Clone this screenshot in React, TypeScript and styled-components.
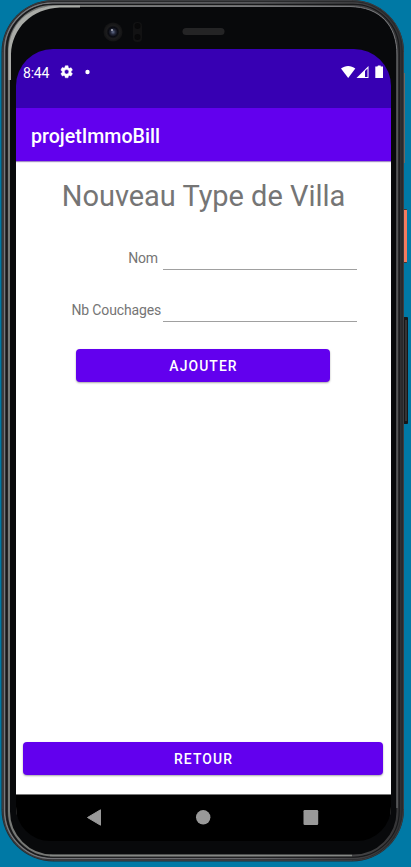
import React from "react";
import styled, { createGlobalStyle } from "styled-components";

const Global = createGlobalStyle`
  * { box-sizing: border-box; }
  body { margin: 0; background: #0079a5; font-family: Roboto, sans-serif; overflow: hidden; }
`;

const Stage = styled.div`
  position: relative;
  width: 411px;
  height: 867px;
  overflow: hidden;
  background: #0079a5;
  padding: 49px 20px 26px 16px;
`;

const Frame = styled.svg`
  position: absolute;
  left: 0;
  top: 0;
`;

const Screen = styled.main`
  position: relative;
  width: 375px;
  height: 792px;
  display: flex;
  flex-direction: column;
  overflow: hidden;
  border-radius: 37px 37px 34px 34px;
`;

const StatusBar = styled.header`
  height: 59px;
  flex: none;
  display: flex;
  align-items: flex-start;
  padding: 15px 7px 0 7px;
  background: #3700b3;
  color: #fff;
`;

const Clock = styled.span`
  width: 37px;
  font-size: 14px;
  line-height: 18px;
  letter-spacing: -0.2px;
`;

const StatusIcons = styled.svg<{ $end?: boolean }>`
  display: block;
  margin-left: ${(p) => (p.$end ? "auto" : "0")};
`;

const AppBar = styled.div`
  position: relative;
  height: 53px;
  flex: none;
  display: flex;
  align-items: center;
  padding: 3px 15px 0;
  background: #6200ee;
  color: #fff;
  font-size: 19.6px;
  font-weight: 500;
  box-shadow: 0 1px 1px rgba(70, 30, 140, 0.5);
`;

const Content = styled.section`
  flex: 1;
  display: flex;
  flex-direction: column;
  background: #fff;
  color: #757575;
`;

const Title = styled.h1`
  margin: 15px 0 0;
  text-align: center;
  font-size: 29px;
  line-height: 40px;
  font-weight: 400;
  letter-spacing: -0.03px;
  white-space: nowrap;
`;

const Form = styled.form`
  display: grid;
  grid-template-columns: 145px 194px;
  column-gap: 2px;
  grid-auto-rows: 52px;
  margin-top: 13px;
`;

const Label = styled.label<{ $inset: number }>`
  text-align: right;
  padding: 19px ${(p) => p.$inset}px 0 0;
  font-size: 14px;
  line-height: 20px;
  letter-spacing: -0.15px;
  white-space: nowrap;
`;

const Field = styled.input`
  align-self: start;
  width: 194px;
  height: 41px;
  padding: 14px 2px 0;
  border: 0;
  border-bottom: 1px solid #a0a0a0;
  outline: 0;
  background: transparent;
  font: 15px Roboto, sans-serif;
`;

const Button = styled.button<{ $width: number }>`
  display: block;
  width: ${(p) => p.$width}px;
  height: 33px;
  flex: none;
  padding: 1px 0 1px 1px;
  border: 0;
  border-radius: 4px;
  background: #6200ee;
  color: #fff;
  font: 500 13.9px Roboto, sans-serif;
  letter-spacing: 1.1px;
  box-shadow: 0 1px 2px rgba(0, 0, 0, 0.35);
`;

const SubmitRow = styled.div`
  margin: 16px 0 0 60px;
`;

const BackRow = styled.div`
  margin: auto 0 20px 7px;
`;

const NavBar = styled.nav`
  height: 46px;
  flex: none;
  background: #000;
  box-shadow: 0 -1px 0 #777;
`;

const ring = (x: number, y: number, r: number, b: number, radius: number) => ({
  x,
  y,
  width: r - x,
  height: b - y,
  rx: radius,
});

function DeviceFrame() {
  return (
    <Frame width="411" height="867" viewBox="0 0 411 867" aria-hidden="true">
      <defs>
        <linearGradient id="edge" x1="0" x2="1" y1="0" y2="0">
          <stop offset="0" stopColor="#77787c" />
          <stop offset="0.65" stopColor="#66676b" />
          <stop offset="1" stopColor="#303032" />
        </linearGradient>
        <linearGradient id="bevel" x1="0" x2="1" y1="0" y2="0">
          <stop offset="0" stopColor="#777976" />
          <stop offset="0.6" stopColor="#6b6b6c" />
          <stop offset="1" stopColor="#353537" />
        </linearGradient>
        <radialGradient id="lens">
          <stop offset="0" stopColor="#65708d" />
          <stop offset="0.25" stopColor="#262a3d" />
          <stop offset="0.5" stopColor="#090a10" />
          <stop offset="0.7" stopColor="#1c1c1d" />
          <stop offset="1" stopColor="#121213" />
        </radialGradient>
      </defs>
      <rect x="402" y="209" width="5" height="54" rx="1" fill="#4f332e" />
      <rect x="404" y="210" width="3" height="52" fill="#f47b5f" />
      <rect x="402" y="317" width="6" height="107" rx="1" fill="#171718" />
      <rect x="405" y="320" width="2" height="101" fill="#343536" />
      <rect x="403" y="73" width="2" height="90" fill="#6d6964" />
      <rect {...ring(1.5, 0, 404, 861.5, 52)} fill="#28292b" />
      <rect {...ring(2.5, 0.5, 403.5, 860.5, 51)} fill="none" stroke="#3c3d40" />
      <rect {...ring(4.5, 3, 400.5, 858.5, 48)} fill="none" stroke="url(#edge)" strokeWidth="1.5" />
      <rect {...ring(6.5, 4.5, 399, 857, 46)} fill="none" stroke="#18191b" strokeWidth="1.5" />
      <rect {...ring(9, 6, 397.5, 855.5, 44)} fill="#08090b" stroke="url(#bevel)" strokeWidth="2" />
      <path d="M8.5 80V54C8.5 24 28 5.5 60 5.5H80V7.5H60C32 8.5 12 28 11 54V80Z" fill="#a9aba7" />
      <path d="M100 6.5H350C380 7 397 25 397 55V808" fill="none" stroke="#77787b" strokeWidth="1" />
      <path d="M50 855.5H352" fill="none" stroke="#858885" strokeWidth="1.5" />
      <circle cx="113" cy="32" r="9.5" fill="url(#lens)" />
      <circle cx="112" cy="30" r="1.1" fill="#aeb1be" />
      <rect x="133" y="22" width="9" height="20" rx="4" fill="#121213" />
      <circle cx="137.5" cy="26" r="3" fill="#080809" />
      <circle cx="137.5" cy="37" r="3" fill="#080809" />
      <rect x="182.5" y="28" width="42" height="7" rx="3.5" fill="#242425" />
    </Frame>
  );
}

export default function App() {
  return (
    <>
      <Global />
      <Stage>
        <DeviceFrame />
        <Screen>
          <StatusBar>
            <Clock>8:44</Clock>
            <StatusIcons width="32" height="16" viewBox="0 0 32 16">
              <g transform="translate(-.8 .4) scale(.62)">
                <path
                  fill="#fff"
                  stroke="#fff"
                  strokeWidth=".7"
                  d="M19.14 12.94c.04-.3.06-.61.06-.94s-.02-.64-.07-.94l2.03-1.58a.5.5 0 0 0 .12-.61l-1.92-3.32a.5.5 0 0 0-.59-.22l-2.39.96a7 7 0 0 0-1.62-.94l-.36-2.54A.5.5 0 0 0 13.92 2h-3.84a.5.5 0 0 0-.47.41l-.36 2.54c-.59.24-1.13.57-1.62.94l-2.39-.96a.5.5 0 0 0-.59.22L2.74 8.87a.5.5 0 0 0 .12.61l2.03 1.58a7 7 0 0 0 0 1.88l-2.03 1.58a.5.5 0 0 0-.12.61l1.92 3.32c.12.22.37.29.59.22l2.39-.96c.5.38 1.03.7 1.62.94l.36 2.54c.05.24.24.41.48.41h3.84c.24 0 .44-.17.47-.41l.36-2.54a7 7 0 0 0 1.62-.94l2.39.96c.22.08.47 0 .59-.22l1.92-3.32a.5.5 0 0 0-.12-.61ZM12 15.6A3.6 3.6 0 1 1 12 8.4a3.6 3.6 0 0 1 0 7.2Z"
                />
              </g>
              <circle cx="27.5" cy="8" r="2.2" fill="#fff" />
            </StatusIcons>
            <StatusIcons $end width="43" height="16" viewBox="0 0 43 16">
              <path d="M0 4.6C4.3 1 10 1 14.3 4.6L7.2 14Z" fill="#fff" />
              <path d="M27.5 2V14H15.5Z" fill="#fff" />
              <path d="M24 7.1 26.5 4.5V13H24Z" fill="#3700b3" />
              <path d="M36.5 2H36.8V1.5H39.7V2.5H42V14H34.3V2.5H36.5Z" fill="#fff" />
            </StatusIcons>
          </StatusBar>
          <AppBar>projetImmoBill</AppBar>
          <Content>
            <Title>Nouveau Type de Villa</Title>
            <Form id="villa">
              <Label htmlFor="nom" $inset={3}>Nom</Label>
              <Field id="nom" />
              <Label htmlFor="beds" $inset={0}>Nb Couchages</Label>
              <Field id="beds" />
            </Form>
            <SubmitRow>
              <Button form="villa" type="button" $width={254}>AJOUTER</Button>
            </SubmitRow>
            <BackRow>
              <Button type="button" $width={360}>RETOUR</Button>
            </BackRow>
          </Content>
          <NavBar>
            <svg width="375" height="46" viewBox="0 1 375 46">
              <path d="M71.5 23.5 84.5 15.8V31.2Z" fill="#999" stroke="#999" strokeLinejoin="round" />
              <circle cx="187.2" cy="23.3" r="7.2" fill="#999" />
              <rect x="287.5" y="16" width="14.7" height="15" rx="1.2" fill="#999" />
            </svg>
          </NavBar>
        </Screen>
      </Stage>
    </>
  );
}
